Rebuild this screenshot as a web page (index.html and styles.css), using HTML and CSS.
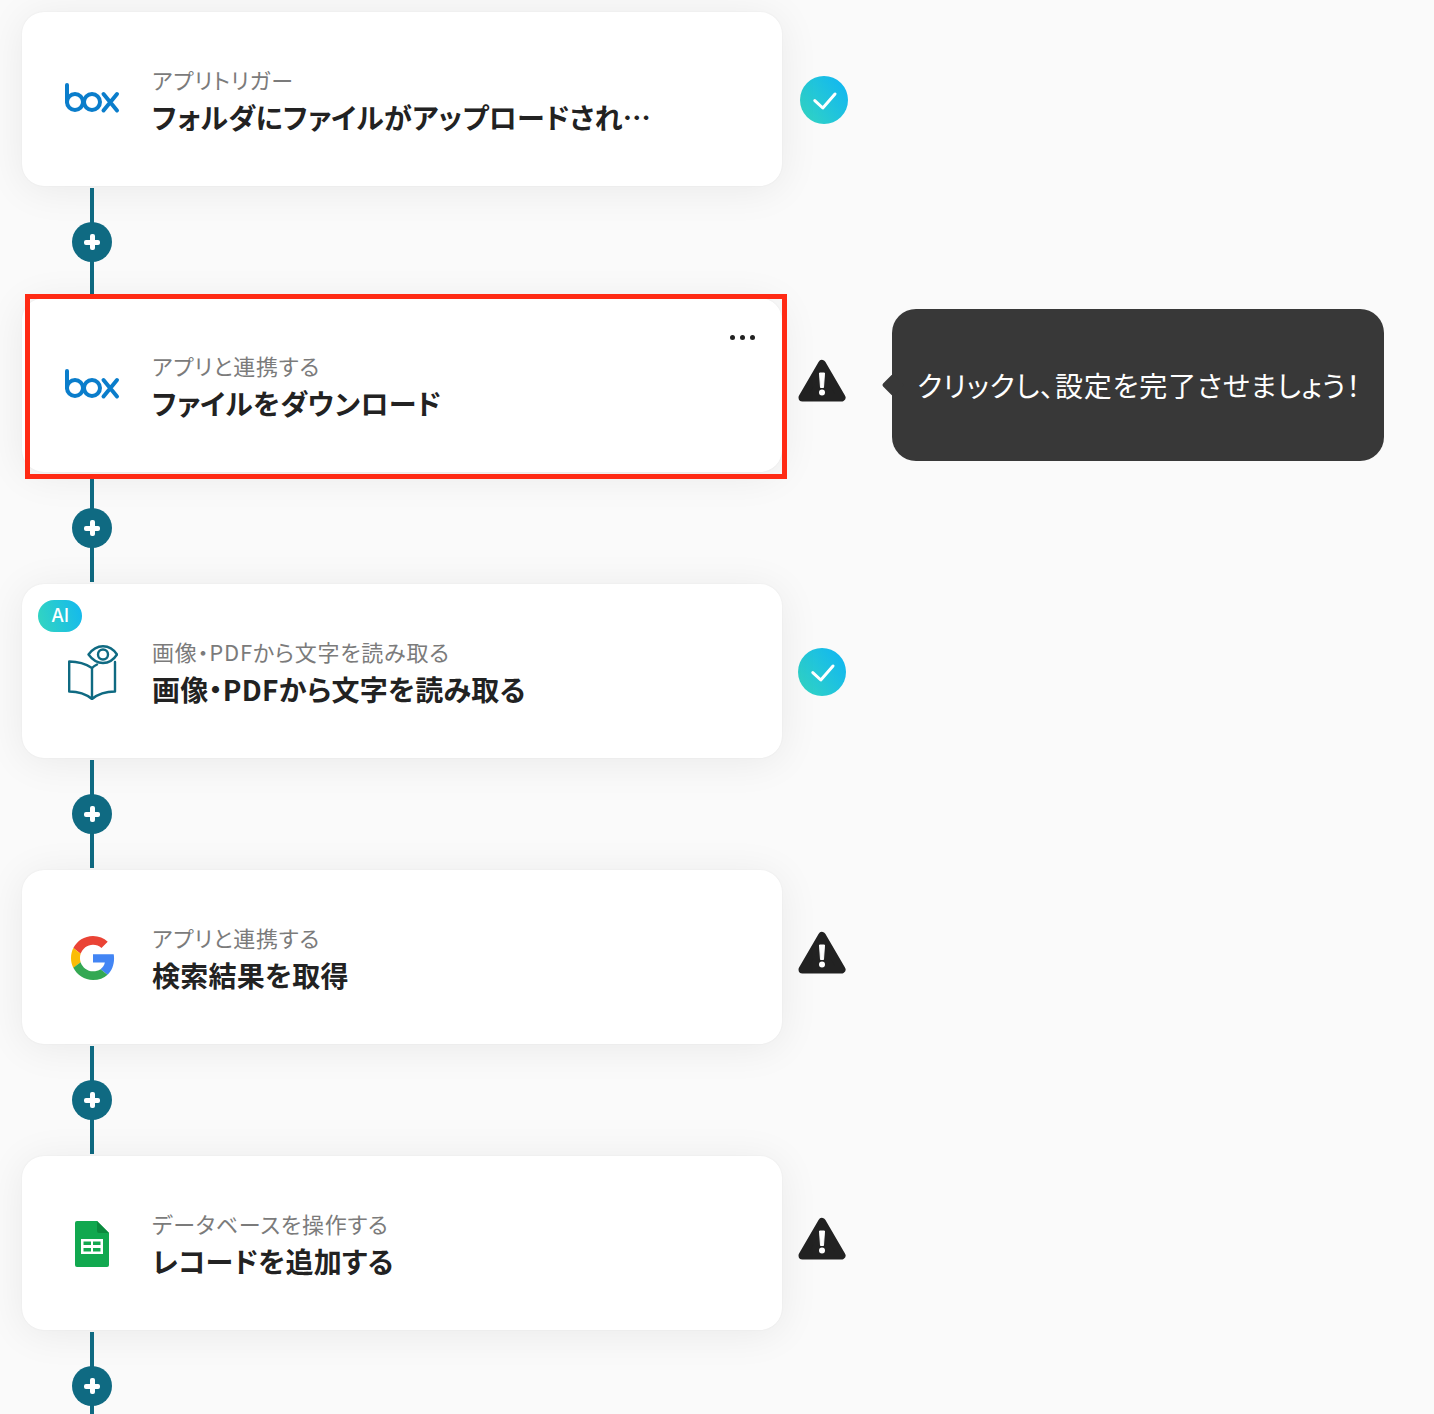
FILE: index.html
```html
<!DOCTYPE html>
<html lang="ja">
<head>
  <meta charset="UTF-8" />
  <title>Flow</title>
  <link rel="stylesheet" href="styles.css">
</head>
<body>
  <svg class="defs" width="0" height="0" aria-hidden="true">
    <defs>
      <linearGradient id="teal" x1="0" y1="1" x2="1" y2="0.3">
        <stop offset="0" stop-color="#34d6bf"/>
        <stop offset="1" stop-color="#13b8ef"/>
      </linearGradient>
      <symbol id="box" viewBox="0 0 56 32">
        <g fill="none" stroke="#0a7dcb" stroke-width="4" stroke-linecap="round">
          <path d="M3 3V20"/>
          <circle cx="11" cy="20" r="8"/>
          <circle cx="28" cy="20" r="8"/>
          <path d="M39.500 12L53 28.500M53 12L39.500 28.500"/>
        </g>
      </symbol>
      <symbol id="check" viewBox="0 0 48 48">
        <circle cx="24" cy="24" r="24" fill="url(#teal)"/>
        <path d="M14.800 24.600L22.800 32L35 18" fill="none" stroke="#fff" stroke-width="3" stroke-linecap="round" stroke-linejoin="round"/>
      </symbol>
      <symbol id="warn" viewBox="0 0 48 44">
        <path d="M24 5L43.500 38.500H4.500Z" fill="#222" stroke="#222" stroke-width="8" stroke-linejoin="round"/>
        <path d="M21.500 14h5l-1 14.500h-3Z" fill="#fff" stroke="#fff" stroke-width="1" stroke-linejoin="round"/>
        <circle cx="24" cy="33.500" r="3" fill="#fff"/>
      </symbol>
    </defs>
  </svg>

  <main class="flow">

    <section class="step">
      <div class="card">
        <div class="app-icon"><svg class="logo-box"><use href="#box"/></svg></div>
        <div class="card-text">
          <p class="label">アプリトリガー</p>
          <p class="title">フォルダにファイルがアップロードされ…</p>
        </div>
      </div>
      <svg class="status status-ok"><use href="#check"/></svg>
    </section>
    <div class="link"><span class="add"></span></div>

    <section class="step step-active">
      <div class="card">
        <span class="more"><i></i><i></i><i></i></span>
        <div class="app-icon"><svg class="logo-box"><use href="#box"/></svg></div>
        <div class="card-text">
          <p class="label">アプリと連携する</p>
          <p class="title">ファイルをダウンロード</p>
        </div>
      </div>
      <svg class="status status-warn"><use href="#warn"/></svg>
      <div class="tip">クリックし、設定を完了させましょう！</div>
    </section>
    <div class="link"><span class="add"></span></div>

    <section class="step">
      <div class="card">
        <span class="ai-badge">AI</span>
        <div class="app-icon">
          <svg class="logo-book" viewBox="0 0 50 55" fill="none" stroke="#0f6a82" stroke-width="2.400" stroke-linejoin="round" stroke-linecap="round">
            <path d="M24 54V23C18 19 10 16.500 1.200 16.500V46.500C10 46.500 18 49 24 54C30 49 38 46.500 47 46.500V17"/>
            <path d="M24 23C25.500 21.500 27 20.500 29 19.500"/>
            <path d="M20.500 9.500C24.500 4 29.500 1.200 35 1.200C40.500 1.200 45.500 4 49 9.500C45.500 15 40.500 18 35 18C29.500 18 24.500 15 20.500 9.500Z"/>
            <circle cx="35" cy="9.500" r="5"/>
          </svg>
        </div>
        <div class="card-text">
          <p class="label">画像・PDFから文字を読み取る</p>
          <p class="title">画像・PDFから文字を読み取る</p>
        </div>
      </div>
      <svg class="status status-ok status-left"><use href="#check"/></svg>
    </section>
    <div class="link"><span class="add"></span></div>

    <section class="step">
      <div class="card">
        <div class="app-icon">
          <svg class="logo-google" viewBox="0 0 48 48">
            <path fill="#ea4335" d="M24 9.500c3.540 0 6.710 1.220 9.210 3.600l6.850-6.850C35.900 2.380 30.470 0 24 0 14.620 0 6.510 5.380 2.560 13.220l7.980 6.190C12.430 13.720 17.740 9.500 24 9.500z"/>
            <path fill="#4285f4" d="M46.980 24.550c0-1.570-.15-3.090-.38-4.550H24v9.020h12.940c-.58 2.960-2.260 5.480-4.780 7.180l7.730 6c4.510-4.180 7.090-10.360 7.090-17.650z"/>
            <path fill="#fbbc05" d="M10.530 28.590c-.48-1.450-.76-2.990-.76-4.590s.27-3.140.76-4.590l-7.980-6.190C.92 16.460 0 20.120 0 24c0 3.880.92 7.540 2.560 10.780l7.970-6.190z"/>
            <path fill="#34a853" d="M24 48c6.480 0 11.930-2.130 15.890-5.810l-7.730-6c-2.150 1.450-4.920 2.300-8.160 2.300-6.260 0-11.570-4.220-13.470-9.910l-7.980 6.190C6.510 42.620 14.620 48 24 48z"/>
          </svg>
        </div>
        <div class="card-text">
          <p class="label">アプリと連携する</p>
          <p class="title">検索結果を取得</p>
        </div>
      </div>
      <svg class="status status-warn"><use href="#warn"/></svg>
    </section>
    <div class="link"><span class="add"></span></div>

    <section class="step">
      <div class="card">
        <div class="app-icon">
          <svg class="logo-sheets" viewBox="0 0 34 46">
            <path fill="#11a84f" d="M2 0H22L34 12V44a2 2 0 0 1-2 2H2a2 2 0 0 1-2-2V2a2 2 0 0 1 2-2Z"/>
            <path fill="#0b8a3e" d="M22 0L34 12H24a2 2 0 0 1-2-2Z"/>
            <path fill="#fff" d="M6 18H28V33H6ZM8.500 20.500V24H16V20.500ZM18 20.500V24H25.500V20.500ZM8.500 27V30.500H16V27ZM18 27V30.500H25.500V27Z" fill-rule="evenodd"/>
          </svg>
        </div>
        <div class="card-text">
          <p class="label">データベースを操作する</p>
          <p class="title">レコードを追加する</p>
        </div>
      </div>
      <svg class="status status-warn"><use href="#warn"/></svg>
    </section>
    <div class="link link-last"><span class="add"></span></div>

  </main>
</body>
</html>
```
FILE: styles.css
```css
:root {
  --bg: #fafafa;
  --fg: #222222;
  --muted: #7b7b7b;
  --line: #0f6a82;
  --red: #ff2a14;
}

*, *::before, *::after {
  margin: 0;
  padding: 0;
  box-sizing: border-box;
}

html, body {
  height: 1414px;
  overflow: hidden;
}

body {
  background-color: var(--bg);
  color: var(--fg);
  font-family: "Noto Sans CJK JP", "Noto Sans", sans-serif;
  font-feature-settings: "palt";
}

.defs {
  position: absolute;
}

.flow {
  padding: 12px 0 0 22px;
}

.step {
  position: relative;
  display: flex;
  align-items: center;
  height: 174px;
}

.card {
  position: relative;
  width: 760px;
  height: 174px;
  display: flex;
  align-items: center;
  gap: 30px;
  padding: 0 0 0 40px;
  background-color: #fff;
  border-radius: 22px;
  box-shadow: 0 0 2px rgba(0, 0, 0, 0.06), 0 4px 40px rgba(0, 0, 0, 0.07);
}

.step-active::before {
  content: "";
  position: absolute;
  z-index: 1;
  left: 3px;
  top: -4px;
  width: 762px;
  height: 185px;
  border: 5px solid var(--red);
  pointer-events: none;
}

.app-icon {
  width: 60px;
  display: flex;
  justify-content: center;
}

.logo-box {
  width: 56px;
  height: 32px;
  margin-top: -2px;
}

.logo-book {
  width: 50px;
  height: 55px;
  margin: 3px 0 0 2px;
}

.logo-google {
  width: 44px;
  height: 44px;
  margin: 2px 0 0 2px;
}

.logo-sheets {
  width: 34px;
  height: 46px;
  margin-top: 2px;
}

.card-text {
  margin-top: 2px;
}

.label {
  font-size: 22px;
  line-height: 30px;
  letter-spacing: 0.035em;
  color: var(--muted);
  margin-bottom: 4px;
}

.title {
  font-size: 28px;
  line-height: 38px;
  font-weight: 700;
  letter-spacing: 0.01em;
}

.status {
  flex: none;
  width: 48px;
}

.status-ok {
  height: 48px;
  margin-left: 18px;
  margin-top: 2px;
}

.status-left {
  margin-left: 16px;
}

.status-warn {
  height: 44px;
  margin-left: 16px;
  margin-top: -8px;
  background-color: var(--bg);
}

.more {
  position: absolute;
  top: 37px;
  right: 27px;
  display: flex;
  gap: 5px;
}

.more i {
  width: 5px;
  height: 5px;
  border-radius: 50%;
  background-color: var(--fg);
}

.ai-badge {
  position: absolute;
  left: 16px;
  top: 16px;
  width: 44px;
  height: 32px;
  border-radius: 16px;
  background: linear-gradient(75deg, #34d6bf, #13b8ef);
  color: #fff;
  font-family: Inter, sans-serif;
  font-size: 18px;
  font-weight: 500;
  line-height: 32px;
  text-align: center;
}

.tip {
  position: absolute;
  left: 870px;
  top: 11px;
  width: 492px;
  height: 152px;
  display: flex;
  align-items: center;
  padding-left: 25px;
  background-color: #383838;
  color: #fff;
  border-radius: 24px;
  font-size: 28px;
  letter-spacing: 0.03em;
  white-space: nowrap;
}

.tip::before {
  content: "";
  position: absolute;
  left: -7px;
  top: 68px;
  width: 16px;
  height: 16px;
  background-color: #383838;
  transform: rotate(45deg);
  border-radius: 2px;
}

.link {
  position: relative;
  height: 112px;
  width: 40px;
  margin-left: 50px;
  display: flex;
  align-items: center;
  justify-content: center;
}

.link::before {
  content: "";
  position: absolute;
  left: 18px;
  top: 2px;
  bottom: 2px;
  width: 4px;
  background-color: var(--line);
}

.add {
  position: relative;
  width: 40px;
  height: 40px;
  border-radius: 50%;
  background-color: var(--line);
}

.add::before,
.add::after {
  content: "";
  position: absolute;
  background-color: #fff;
  border-radius: 2px;
}

.add::before {
  left: 12px;
  top: 17.500px;
  width: 16px;
  height: 5px;
}

.add::after {
  left: 17.500px;
  top: 12px;
  width: 5px;
  height: 16px;
}
```
